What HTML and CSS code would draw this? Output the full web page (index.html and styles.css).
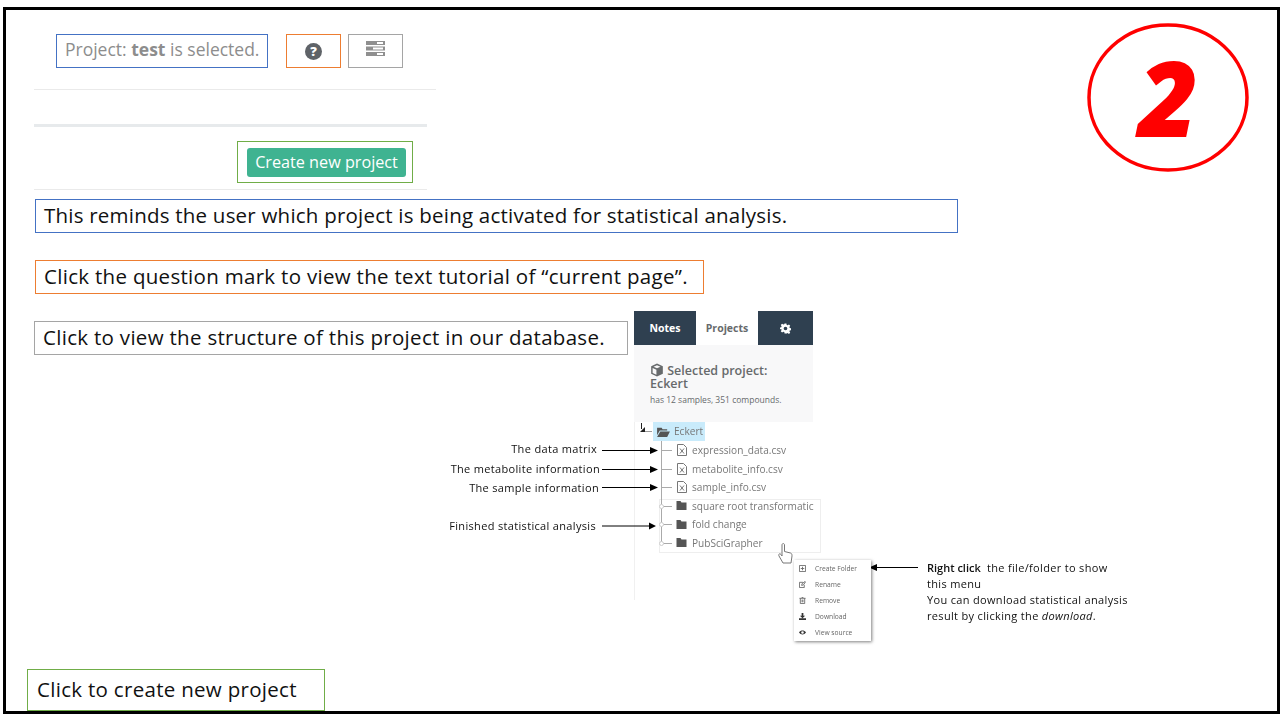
FILE: index.html
```html
<!DOCTYPE html>
<html>
    <head>
        <title>Project tutorial</title>
        <meta charset="UTF-8" />
        <link rel="stylesheet" href="styles.css">
    </head>
    <body>
        <div class="slide">
            <!-- top left part, cut from the app -->
            <div class="shape project-box"><span>Project: <b>test</b> is selected.</span></div>
            <div class="shape help-box"><span class="help-icon">?</span></div>
            <div class="shape server-box">
                <svg width="19" height="15" viewBox="0 0 19 15">
                    <rect x="0" y="0" width="19" height="4" fill="#8f8f8f"/>
                    <rect x="11" y="1" width="6" height="2" fill="#fff"/>
                    <rect x="0" y="5.5" width="19" height="4" fill="#8f8f8f"/>
                    <rect x="7" y="6.5" width="10" height="2" fill="#fff"/>
                    <rect x="0" y="11" width="19" height="4" fill="#8f8f8f"/>
                    <rect x="11" y="12" width="6" height="2" fill="#fff"/>
                </svg>
            </div>
            <div class="rule rule-top"></div>
            <div class="rule rule-thick"></div>
            <div class="shape create-box"><span class="create-btn">Create new project</span></div>
            <div class="rule rule-bottom"></div>

            <!-- callouts -->
            <div class="shape callout callout-blue">This reminds the user which project is being activated for statistical analysis.</div>
            <div class="shape callout callout-orange">Click the question mark to view the text tutorial of “current page”.</div>
            <div class="shape callout callout-gray">Click to view the structure of this project in our database.</div>
            <div class="shape callout callout-green">Click to create new project</div>

            <!-- the number in the corner -->
            <svg class="step-ring" width="164" height="151" viewBox="0 0 164 151">
                <ellipse cx="82" cy="75.5" rx="79" ry="72.5" fill="none" stroke="#f00" stroke-width="3.5"/>
            </svg>
            <div class="step-num">2</div>

            <!-- sidebar screenshot -->
            <div class="panel">
                <div class="tabs">
                    <span class="tab tab-notes">Notes</span>
                    <span class="tab tab-active">Projects</span>
                    <span class="tab tab-gear">
                        <svg width="11" height="11" viewBox="0 0 24 24">
                            <path fill="#fff" fill-rule="evenodd" d="M10 1h4l.7 3.2 2 .8 2.8-1.800 2.800 2.800-1.800 2.800.8 2 3.200.7v4l-3.200.7-.8 2 1.800 2.800-2.800 2.800-2.800-1.800-2 .8L14 23h-4l-.7-3.200-2-.8-2.800 1.800-2.800-2.800 1.800-2.800-.8-2L-.5 14v-4l3.200-.7.8-2L1.700 4.500 4.500 1.700l2.800 1.800 2-.8zM12 8a4 4 0 1 0 0 8 4 4 0 0 0 0-8z"/>
                        </svg>
                    </span>
                </div>
                <div class="panel-head">
                    <h5>
                        <svg width="14" height="14" viewBox="0 0 24 24">
                            <path fill="#676a6c" d="M12 1l10 4.500v13L12 23 2 18.500v-13zM12 4L6 6.500l6 2.500 6-2.500zM4.500 8.500v8.500l6.500 3v-8.500z"/>
                        </svg>
                        Selected project:<br>Eckert
                    </h5>
                    <p>has 12 samples, 351 compounds.</p>
                </div>
                <div class="tree">
                    <div class="tree-root">
                        <svg width="13" height="11" viewBox="0 0 14 12">
                            <path fill="#555" d="M0 2h5l1 1.500h5V5H3L0 10zM3.500 6H14l-3 6H0z"/>
                        </svg>
                        Eckert
                    </div>
                    <div class="tree-row">
                        <svg class="file-icon" width="10" height="12" viewBox="0 0 10 12"><path fill="none" stroke="#777" d="M.5.5h6l3 3v8h-9zM3 4.500l4 5M7 4.500l-4 5"/></svg>
                        expression_data.csv
                    </div>
                    <div class="tree-row">
                        <svg class="file-icon" width="10" height="12" viewBox="0 0 10 12"><path fill="none" stroke="#777" d="M.5.5h6l3 3v8h-9zM3 4.500l4 5M7 4.500l-4 5"/></svg>
                        metabolite_info.csv
                    </div>
                    <div class="tree-row">
                        <svg class="file-icon" width="10" height="12" viewBox="0 0 10 12"><path fill="none" stroke="#777" d="M.5.5h6l3 3v8h-9zM3 4.500l4 5M7 4.500l-4 5"/></svg>
                        sample_info.csv
                    </div>
                    <div class="tree-folders">
                        <div class="tree-row">
                            <svg class="file-icon" width="11" height="9" viewBox="0 0 10 9"><path fill="#555" d="M0 0h4l1 1.500h5V9H0z"/></svg>
                            square root transformatic
                        </div>
                        <div class="tree-row">
                            <svg class="file-icon" width="11" height="9" viewBox="0 0 10 9"><path fill="#555" d="M0 0h4l1 1.500h5V9H0z"/></svg>
                            fold change
                        </div>
                        <div class="tree-row">
                            <svg class="file-icon" width="11" height="9" viewBox="0 0 10 9"><path fill="#555" d="M0 0h4l1 1.500h5V9H0z"/></svg>
                            PubSciGrapher
                        </div>
                    </div>
                </div>
            </div>

            <svg class="lines" width="1280" height="720" viewBox="0 0 1280 720">
                <!-- tree branches -->
                <path fill="none" stroke="#aaa" d="M661.500 441V545M661.500 450.500H672M661.500 469.500H672M661.500 487.500H672M661.500 506.500H672M661.500 524.500H672M661.500 543.500H672"/>
                <circle cx="661.500" cy="506.500" r="2" fill="#fff" stroke="#ccc"/>
                <circle cx="661.500" cy="524.500" r="2" fill="#fff" stroke="#ccc"/>
                <circle cx="661.500" cy="543.500" r="2" fill="#fff" stroke="#ccc"/>
                <path fill="none" stroke="#999" d="M645 431.500H652"/>
                <path fill="none" stroke="#222" d="M641.500 423V429"/>
                <path fill="#222" d="M645 427v5h-5z"/>
                <!-- arrows -->
                <path fill="none" stroke="#000" d="M602 450.500H652M602 469.500H652M602 487.500H652M602 526H652M918 567.500H874"/>
                <path fill="#000" d="M650 447l8 3.500-8 3.500zM650 466l8 3.500-8 3.500zM650 484l8 3.500-8 3.500zM649 522.500l7 3.500-7 3.500zM877 564l-8 3.500 8 3.500z"/>
                <!-- hand cursor -->
                <path fill="#fff" stroke="#777" d="M782 545c0-2 2.500-2 2.500 0v6.500l6 1.500c1.500.5 1.500 2 1.500 3l-1 7h-8l-4-7c-1-2 1-3 2-1.500l1 1.500z"/>
            </svg>

            <div class="ctx-menu">
                <div class="ctx-item">
                    <svg width="7" height="7" viewBox="0 0 8 8"><path fill="none" stroke="#666" d="M.5.5h7v7h-7zM2 4h4M4 2v4"/></svg>
                    Create Folder
                </div>
                <div class="ctx-item">
                    <svg width="7" height="7" viewBox="0 0 8 8"><path fill="none" stroke="#666" d="M6 4.500v3H.5v-6h4M3 5l.5-2L7 .5 7.500 1 5 4.500z"/></svg>
                    Rename
                </div>
                <div class="ctx-item">
                    <svg width="7" height="7" viewBox="0 0 8 8"><path fill="none" stroke="#666" d="M.5 1.500h7M1.500 1.500v6h5v-6M3 .5h2M3.500 3v3M4.500 3v3"/></svg>
                    Remove
                </div>
                <div class="ctx-item">
                    <svg width="7" height="7" viewBox="0 0 8 8"><path fill="#333" d="M3 0h2v3h2L4 6 1 3h2zM0 6h8v2H0z"/></svg>
                    Download
                </div>
                <div class="ctx-item">
                    <svg width="7" height="7" viewBox="0 0 8 8"><path fill="#333" fill-rule="evenodd" d="M0 4c2-3 6-3 8 0-2 3-6 3-8 0zM4 2.500a1.500 1.500 0 1 0 0 3 1.500 1.500 0 0 0 0-3z"/></svg>
                    View source
                </div>
            </div>

            <!-- small labels round the tree -->
            <div class="label label-a">The data matrix</div>
            <div class="label label-b">The metabolite information</div>
            <div class="label label-c">The sample information</div>
            <div class="label label-d">Finished statistical analysis</div>
            <div class="menu-note">
                <b>Right click</b> the file/folder to show<br>
                this menu<br>
                You can download statistical analysis<br>
                result by clicking the <i>download</i>.
            </div>
        </div>
    </body>
</html>
```

FILE: styles.css
```css
body {
    margin: 0;
    background-color: white;
    font-family: "Open Sans", "Noto Sans", sans-serif;
    overflow: hidden;
}

.slide {
    position: absolute;
    top: 7px;
    left: 3px;
    width: 1271px;
    height: 701px;
    border: 3px solid black;
}

/* everything in the slide sits on a free canvas, coords are from the page corner */
.shape,
.rule,
.step-ring,
.step-num,
.panel,
.lines,
.ctx-menu,
.label,
.menu-note {
    position: absolute;
    box-sizing: border-box;
}

.shape {
    border: 1px solid;
    display: flex;
    align-items: center;
}

.project-box {
    top: 24px;
    left: 50px;
    width: 212px;
    height: 34px;
    padding: 0 0 5px 8px;
    border-color: #4472c4;
    color: #8d8d8d;
    font-size: 17.500px;
    white-space: nowrap;
}

.help-box {
    top: 24px;
    left: 280px;
    width: 55px;
    height: 34px;
    justify-content: center;
    border-color: #ed7d31;
}

.help-icon {
    width: 17px;
    height: 17px;
    margin-top: 1px;
    border-radius: 50%;
    background-color: #5f6368;
    color: white;
    font-size: 13px;
    font-weight: 800;
    line-height: 17px;
    text-align: center;
}

.server-box {
    top: 24px;
    left: 342px;
    width: 55px;
    height: 34px;
    justify-content: center;
    padding-bottom: 5px;
    border-color: #a5a5a5;
}

.rule {
    background-color: #eaeaea;
    height: 1px;
}

.rule-top {
    top: 79px;
    left: 28px;
    width: 402px;
}

.rule-thick {
    top: 114px;
    left: 28px;
    width: 393px;
    height: 3px;
    background-color: #e7eaec;
}

.rule-bottom {
    top: 179px;
    left: 28px;
    width: 393px;
}

.create-box {
    top: 131px;
    left: 231px;
    width: 176px;
    height: 42px;
    padding-left: 9px;
    border-color: #70ad47;
}

.create-btn {
    width: 159px;
    height: 29px;
    border-radius: 3px;
    background-color: #3fb391;
    color: white;
    font-size: 16.200px;
    line-height: 29px;
    text-align: center;
    white-space: nowrap;
}

.callout {
    padding: 0 0 2px 8px;
    color: #111;
    font-size: 20.500px;
    letter-spacing: 0.300px;
    white-space: nowrap;
}

.callout-blue {
    top: 189px;
    left: 29px;
    width: 923px;
    height: 34px;
    border-color: #4472c4;
    letter-spacing: 0.220px;
}

.callout-orange {
    top: 250px;
    left: 29px;
    width: 669px;
    height: 34px;
    border-color: #ed7d31;
}

.callout-gray {
    top: 311px;
    left: 28px;
    width: 594px;
    height: 34px;
    border-color: #a5a5a5;
}

.callout-green {
    top: 659px;
    left: 21px;
    width: 298px;
    height: 42px;
    padding-left: 9px;
    border-color: #70ad47;
}

.step-ring {
    top: 12px;
    left: 1080px;
}

.step-num {
    top: 15px;
    left: 1132px;
    color: #f00;
    font-size: 104px;
    font-style: italic;
    font-weight: 800;
    line-height: 144px;
}

.panel {
    top: 301px;
    left: 628px;
    width: 179px;
    height: 289px;
    color: #676a6c;
    filter: blur(0.300px);
}

.tabs {
    display: flex;
    height: 34px;
}

.tab {
    display: flex;
    align-items: center;
    justify-content: center;
    font-size: 10.500px;
    font-weight: 700;
    background-color: #2f4050;
    color: white;
}

.tab-notes {
    width: 62px;
}

.tab-active {
    width: 62px;
    background-color: white;
    color: #676a6c;
}

.tab-gear {
    flex: 1;
}

.panel-head {
    height: 77px;
    padding: 18px 0 0 16px;
    box-sizing: border-box;
    background-color: #f8f8f9;
}

.panel-head h5 {
    margin: 0;
    font-size: 12.500px;
    font-weight: 600;
    line-height: 13px;
}

.panel-head svg {
    vertical-align: -2px;
}

.panel-head p {
    margin: 4px 0 0 0;
    font-size: 8.500px;
}

.tree {
    height: 178px;
    border-left: 1px solid #f0f0f0;
    color: #777;
    font-size: 10.100px;
}

.tree-root {
    display: flex;
    align-items: center;
    gap: 4px;
    width: 52px;
    height: 19px;
    margin-left: 18px;
    padding: 0 0 1px 4px;
    box-sizing: border-box;
    background-color: #c9ebfb;
}

.tree-row {
    display: flex;
    align-items: center;
    gap: 5px;
    height: 18.600px;
    padding-left: 42px;
    white-space: nowrap;
}

.file-icon {
    flex: none;
}

.tree-folders {
    width: 162px;
    height: 54px;
    margin: 2px 0 0 24px;
    border: 1px solid #eee;
    box-sizing: border-box;
    overflow: hidden;
}

.tree-folders .tree-row {
    height: 18.400px;
    padding-left: 16px;
}

.tree-folders .tree-row:first-child {
    margin-top: -3px;
}

.lines {
    top: -10px;
    left: -6px;
    pointer-events: none;
}

.ctx-menu {
    top: 550px;
    left: 788px;
    width: 77px;
    height: 81px;
    background-color: white;
    box-shadow: 1px 1px 3px rgba(0, 0, 0, 0.5);
    color: #666;
    font-size: 6.700px;
    filter: blur(0.300px);
}

.ctx-item {
    display: flex;
    align-items: center;
    gap: 9px;
    height: 16px;
    padding-left: 5px;
    white-space: nowrap;
}

.label,
.menu-note {
    color: #111;
    font-size: 11px;
    letter-spacing: 0.330px;
    white-space: nowrap;
}

.label {
    line-height: 14px;
}

.label-a {
    top: 432px;
    right: 680px;
}

.label-b {
    top: 452px;
    right: 677px;
}

.label-c {
    top: 471px;
    right: 678px;
}

.label-d {
    top: 509px;
    right: 681px;
}

.menu-note {
    top: 550px;
    left: 921px;
    line-height: 16px;
}

.menu-note b {
    margin-right: 3px;
    font-weight: 600;
    letter-spacing: 0;
}
```
